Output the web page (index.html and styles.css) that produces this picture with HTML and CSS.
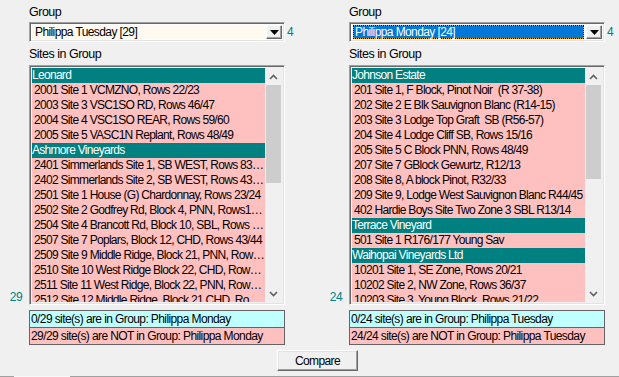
FILE: index.html
```html
<!DOCTYPE html>
<html lang="en">
<head>
    <meta charset="UTF-8">
    <title>Compare Site Groups</title>
    <link rel="stylesheet" href="styles.css">
</head>
<body>
    <div class="form">
        <div class="panels">
            <!-- left group -->
            <section class="panel">
                <div class="label group-label">Group</div>
                <div class="combo">
                    <div class="combo-field cream"><span class="combo-text">Philippa Tuesday [29]</span></div>
                    <span class="drop-btn"><svg width="9" height="5" viewBox="0 0 9 5"><path d="M0 0h9L4.5 5z" fill="#000"/></svg></span>
                </div>
                <span class="combo-count">4</span>
                <div class="label sites-label">Sites in Group</div>
                <span class="total">29</span>
                <div class="list">
                    <ul class="items">
                        <li class="head">Leonard</li>
                        <li>2001 Site 1 VCMZNO, Rows 22/23</li>
                        <li>2003 Site 3 VSC1SO RD, Rows 46/47</li>
                        <li>2004 Site 4 VSC1SO REAR, Rows 59/60</li>
                        <li>2005 Site 5 VASC1N Replant, Rows 48/49</li>
                        <li class="head">Ashmore Vineyards</li>
                        <li>2401 Simmerlands Site 1, SB WEST, Rows 83/84</li>
                        <li>2402 Simmerlands Site 2, SB WEST, Rows 43/44</li>
                        <li>2501 Site 1 House (G) Chardonnay, Rows 23/24</li>
                        <li>2502 Site 2 Godfrey Rd, Block 4, PNN, Rows14/15</li>
                        <li>2504 Site 4 Brancott Rd, Block 10, SBL, Rows 3/4</li>
                        <li>2507 Site 7 Poplars, Block 12, CHD, Rows 43/44</li>
                        <li>2509 Site 9 Middle Ridge, Block 21, PNN, Rows 8/9</li>
                        <li>2510 Site 10 West Ridge Block 22, CHD, Rows 5/6</li>
                        <li>2511 Site 11 West Ridge, Block 22, PNN, Rows 7/8</li>
                        <li>2512 Site 12 Middle Ridge, Block 21 CHD, Rows 2/3</li>
                    </ul>
                    <div class="scrollbar">
                        <span class="arrow"><svg width="9" height="6" viewBox="0 0 9 6"><path d="M1 5L4.5 1.5L8 5" fill="none" stroke="#606060" stroke-width="1.6"/></svg></span>
                        <div class="track"><div class="thumb thumb-left"></div></div>
                        <span class="arrow"><svg width="9" height="6" viewBox="0 0 9 6"><path d="M1 1L4.5 4.5L8 1" fill="none" stroke="#606060" stroke-width="1.6"/></svg></span>
                    </div>
                </div>
                <div class="status">
                    <div class="status-in">0/29 site(s) are in Group: Philippa Monday</div>
                    <div class="status-out">29/29 site(s) are NOT in Group: Philippa Monday</div>
                </div>
            </section>

            <!-- right group -->
            <section class="panel">
                <div class="label group-label">Group</div>
                <div class="combo">
                    <div class="combo-field"><span class="combo-text selected">Philippa Monday [24]</span></div>
                    <span class="drop-btn"><svg width="9" height="5" viewBox="0 0 9 5"><path d="M0 0h9L4.5 5z" fill="#000"/></svg></span>
                </div>
                <span class="combo-count">4</span>
                <div class="label sites-label">Sites in Group</div>
                <span class="total">24</span>
                <div class="list">
                    <ul class="items">
                        <li class="head">Johnson Estate</li>
                        <li>201 Site 1, F Block, Pinot Noir&nbsp; (R 37-38)</li>
                        <li>202 Site 2 E Blk Sauvignon Blanc (R14-15)</li>
                        <li>203 Site 3 Lodge Top Graft&nbsp; SB (R56-57)</li>
                        <li>204 Site 4 Lodge Cliff SB, Rows 15/16</li>
                        <li>205 Site 5 C Block PNN, Rows 48/49</li>
                        <li>207 Site 7 GBlock Gewurtz, R12/13</li>
                        <li>208 Site 8, A block Pinot, R32/33</li>
                        <li>209 Site 9, Lodge West Sauvignon Blanc R44/45</li>
                        <li>402 Hardie Boys Site Two Zone 3 SBL R13/14</li>
                        <li class="head">Terrace Vineyard</li>
                        <li>501 Site 1 R176/177 Young Sav</li>
                        <li class="head">Waihopai Vineyards Ltd</li>
                        <li>10201 Site 1, SE Zone, Rows 20/21</li>
                        <li>10202 Site 2, NW Zone, Rows 36/37</li>
                        <li>10203 Site 3, Young Block, Rows 21/22</li>
                    </ul>
                    <div class="scrollbar">
                        <span class="arrow"><svg width="9" height="6" viewBox="0 0 9 6"><path d="M1 5L4.5 1.5L8 5" fill="none" stroke="#606060" stroke-width="1.6"/></svg></span>
                        <div class="track"><div class="thumb thumb-right"></div></div>
                        <span class="arrow"><svg width="9" height="6" viewBox="0 0 9 6"><path d="M1 1L4.5 4.5L8 1" fill="none" stroke="#606060" stroke-width="1.6"/></svg></span>
                    </div>
                </div>
                <div class="status">
                    <div class="status-in">0/24 site(s) are in Group: Philippa Tuesday</div>
                    <div class="status-out">24/24 site(s) are NOT in Group: Philippa Tuesday</div>
                </div>
            </section>
        </div>

        <div class="actions">
            <button class="btn">Compare</button>
        </div>
        <div class="tab-edge"><span class="tab-gap"></span></div>
    </div>
</body>
</html>
```

FILE: styles.css
```css
body {
    margin: 0;
    background: #f0f0f0;
    font-family: "Liberation Sans", Arial, sans-serif;
    font-size: 12px;
    letter-spacing: -0.6px;
    color: #000;
    overflow: hidden;
}
.form {
    width: 619px;
    height: 377px;
    position: relative;
    overflow: hidden;
}
.panels {
    display: flex;
}
.panel {
    width: 320px;
    flex: none;
    display: grid;
    grid-template-columns: 29px 256px auto;
    padding-top: 5px;
}
.label {
    grid-column: 2;
    height: 15px;
    line-height: 15px;
    font-size: 12.5px;
    letter-spacing: -0.5px;
}
.group-label {
    margin-bottom: 2px;
}
.sites-label {
    margin-top: 5px;
    margin-bottom: 3px;
}

/* combo box */
.combo {
    grid-column: 2;
    height: 20px;
    box-sizing: border-box;
    border-top: 1px solid #a0a0a0;
    border-left: 1px solid #a0a0a0;
    border-right: 1px solid #fff;
    border-bottom: 1px solid #fff;
    box-shadow: inset 1px 1px 0 #696969, inset -1px -1px 0 #e3e3e3;
    background: #fff;
    display: flex;
    align-items: stretch;
    padding: 2px;
}
.combo-field {
    flex: 1;
    display: flex;
    align-items: center;
    padding: 1px 2px 1px 1px;
}
.cream {
    background: #fffaf0;
}
.combo-text {
    line-height: 12px;
    padding: 0 1px 0 1px;
    border: 1px solid transparent;
}
.combo-text.selected {
    flex: 1;
    color: #fff;
    background: linear-gradient(#0078d7, #0078d7) padding-box, #ff9a1f border-box;
    border: 1px dotted #000;
}
.drop-btn {
    width: 14px;
    flex: none;
    background: #f0f0f0;
    border-top: 1px solid #fff;
    border-left: 1px solid #fff;
    border-right: 1px solid #696969;
    border-bottom: 1px solid #696969;
    box-shadow: inset -1px -1px 0 #a0a0a0;
    display: flex;
    align-items: center;
    justify-content: center;
}
.combo-count {
    grid-column: 3;
    grid-row: 2;
    color: #008080;
    line-height: 20px;
    padding-left: 2px;
}

/* list box */
.total {
    grid-column: 1;
    grid-row: 4;
    align-self: end;
    text-align: right;
    padding-right: 7px;
    color: #008080;
    line-height: 14px;
    margin-bottom: 1px;
}
.list {
    grid-column: 2;
    grid-row: 4;
    height: 240px;
    box-sizing: border-box;
    border-top: 1px solid #a0a0a0;
    border-left: 1px solid #a0a0a0;
    border-right: 1px solid #fff;
    border-bottom: 1px solid #fff;
    box-shadow: inset 1px 1px 0 #696969, inset -1px -1px 0 #e3e3e3;
    padding: 2px 2px 2px 2px;
    display: flex;
    overflow: hidden;
}
.items {
    list-style: none;
    margin: 0;
    padding: 0;
    flex: 1;
    min-width: 0;
    background: #ffc0c0;
    overflow: hidden;
    letter-spacing: -0.7px;
}
.items li {
    height: 15px;
    line-height: 15px;
    padding-left: 2px;
    white-space: nowrap;
    overflow: hidden;
    text-overflow: ellipsis;
}
.items li.head {
    background: #008080;
    color: #fff;
    padding-left: 0;
}
.scrollbar {
    width: 17px;
    flex: none;
    background: #f0f0f0;
    display: flex;
    flex-direction: column;
}
.arrow {
    height: 17px;
    flex: none;
    display: flex;
    align-items: center;
    justify-content: center;
}
.track {
    flex: 1;
    padding: 0 1px;
}
.thumb {
    background: #cdcdcd;
}
.thumb-left {
    height: 98px;
}
.thumb-right {
    height: 94px;
}

/* status labels */
.status {
    grid-column: 2;
    grid-row: 5;
    margin-top: 5px;
    border: 1px solid #646464;
}
.status-in,
.status-out {
    height: 16px;
    line-height: 16px;
    padding-left: 1px;
    white-space: nowrap;
}
.status-in {
    background: #c0ffff;
    border-bottom: 1px solid #646464;
}
.status-out {
    background: #ffc0c0;
}

/* button */
.actions {
    display: flex;
    justify-content: center;
    padding-top: 5px;
    padding-left: 16px;
}
.btn {
    width: 81px;
    height: 21px;
    font-family: inherit;
    font-size: 12px;
    letter-spacing: -0.6px;
    background: #f0f0f0;
    border-top: 1px solid #fff;
    border-left: 1px solid #fff;
    border-right: 1px solid #696969;
    border-bottom: 1px solid #696969;
    box-shadow: inset -1px -1px 0 #a0a0a0, inset 1px 1px 0 #e3e3e3;
    padding: 0;
}
.tab-edge {
    position: absolute;
    left: 0;
    right: 0;
    bottom: 0;
    height: 1px;
    background: #a0a0a0;
}
.tab-gap {
    display: block;
    margin-left: 14px;
    width: 56px;
    height: 1px;
    background: #f8f8f8;
}
```
